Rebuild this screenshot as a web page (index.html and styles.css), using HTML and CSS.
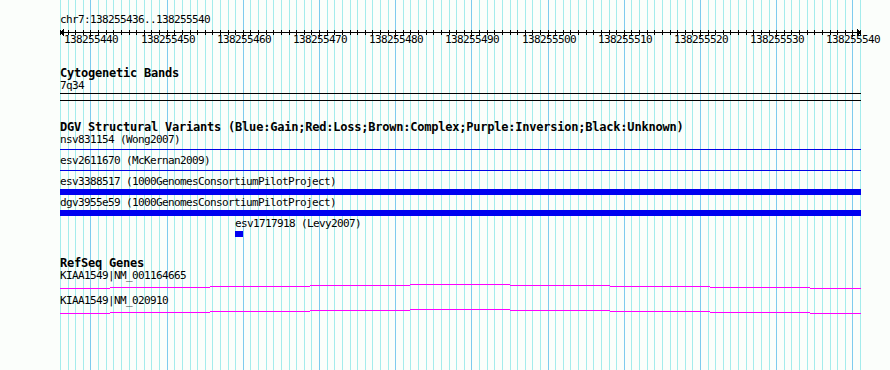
FILE: index.html
```html
<!DOCTYPE html>
<html lang="en">
<head>
    <meta charset="UTF-8">
    <title>chr7:138255436..138255540</title>
    <link rel="stylesheet" href="styles.css">
</head>
<body>
<div class="panel">
    <!--背景网格，由 script.js 画线-->
    <svg class="grid" id="grid" width="890" height="370"></svg>
    <div class="tracks">
        <!--标尺-->
        <div class="label ruler-name">chr7:138255436..138255540</div>
        <svg class="axis" id="axis" width="801" height="20"></svg>

        <!--细胞遗传带-->
        <div class="title cyto-title">Cytogenetic Bands</div>
        <div class="label under-title">7q34</div>
        <div class="band"></div>

        <!--DGV 结构变异-->
        <div class="title dgv-title">DGV Structural Variants (Blue:Gain;Red:Loss;Brown:Complex;Purple:Inversion;Black:Unknown)</div>
        <div class="label under-title">nsv831154 (Wong2007)</div>
        <div class="hairline"></div>
        <div class="label next">esv2611670 (McKernan2009)</div>
        <div class="hairline"></div>
        <div class="label next">esv3388517 (1000GenomesConsortiumPilotProject)</div>
        <div class="bar"></div>
        <div class="label after-bar">dgv3955e59 (1000GenomesConsortiumPilotProject)</div>
        <div class="bar"></div>
        <div class="label after-bar shifted">esv1717918 (Levy2007)</div>
        <div class="bar small"></div>

        <!--RefSeq 基因-->
        <div class="title gene-title">RefSeq Genes</div>
        <div class="label under-title">KIAA1549|NM_001164665</div>
        <svg class="intron" width="801" height="5">
            <path d="M0 4.5H50M50 3.5H150M150 2.5H250M250 1.5H350M350 0.5H450M450 1.5H550M550 2.5H650M650 3.5H750M750 4.5H801"/>
        </svg>
        <div class="label gene-next">KIAA1549|NM_020910</div>
        <svg class="intron" width="801" height="5">
            <path d="M0 4.5H50M50 3.5H150M150 2.5H250M250 1.5H350M350 0.5H450M450 1.5H550M550 2.5H650M650 3.5H750M750 4.5H801"/>
        </svg>
    </div>
</div>
<script src="script.js"></script>
</body>
</html>
```

FILE: styles.css
```css
* {
    padding: 0;
    margin: 0;
}

body {
    background: #fbfefb;
    width: 890px;
    height: 370px;
    overflow: hidden;
}

.panel {
    position: relative;
    width: 890px;
    height: 370px;
}

.grid {
    position: absolute;
    left: 0;
    top: 0;
}

.grid .minor {
    stroke: #a4ecec;
    stroke-width: 1;
}

.grid .major {
    stroke: #7ecbee;
    stroke-width: 1;
}

.tracks {
    position: relative;
    padding-left: 60px;
    width: 801px;
    display: flex;
    flex-direction: column;
    align-items: flex-start;
}

.label {
    font: 11px/12px "DejaVu Sans Mono", monospace;
    letter-spacing: -0.62px;
    height: 12px;
    white-space: nowrap;
    color: #000;
}

.title {
    font: bold 12px/12px "DejaVu Sans Mono", monospace;
    letter-spacing: -0.22px;
    height: 12px;
    white-space: nowrap;
    color: #000;
}

.ruler-name {
    margin-top: 14px;
}

.axis {
    overflow: visible;
}

.axis line,
.axis path {
    stroke: #000;
    stroke-width: 1;
    fill: none;
}

.axis text {
    font: 11px "DejaVu Sans Mono", monospace;
    letter-spacing: -0.62px;
    fill: #000;
}

.cyto-title {
    margin-top: 21px;
}

.under-title {
    margin-top: 1px;
}

.band {
    width: 801px;
    height: 6px;
    margin-top: 1px;
    border-top: 1px solid #000;
    border-bottom: 1px solid #000;
}

.dgv-title {
    margin-top: 20px;
}

.hairline {
    width: 801px;
    height: 1px;
    margin-top: 3px;
    background: #0000e6;
}

.next {
    margin-top: 5px;
}

.bar {
    width: 801px;
    height: 6px;
    margin-top: 1px;
    background: #0000f0;
}

.after-bar {
    margin-top: 2px;
}

.shifted,
.bar.small {
    margin-left: 175px;
}

.bar.small {
    width: 8px;
}

.gene-title {
    margin-top: 20px;
}

.intron {
    margin-top: 2px;
    shape-rendering: crispEdges;
}

.intron path {
    stroke: #ff00ff;
    stroke-width: 1;
    fill: none;
}

.gene-next {
    margin-top: 6px;
}
```

FILE: script.js
```js
// 显示区间 138255436..138255540，共 105 个碱基，宽 800px
var start = 138255436;
var bases = 105;
var left = 60;
var step = 800 / bases;
var ns = "http://www.w3.org/2000/svg";

function add(parent, name, attrs) {
    var node = document.createElementNS(ns, name);
    for (var key in attrs) {
        node.setAttribute(key, attrs[key]);
    }
    parent.appendChild(node);
    return node;
}

var grid = document.getElementById("grid");
var axis = document.getElementById("axis");
grid.setAttribute("shape-rendering", "crispEdges");
axis.setAttribute("shape-rendering", "crispEdges");

// 轴线和两端箭头（坐标相对于 x=60）
add(axis, "line", {x1: 0, y1: 6.5, x2: 801, y2: 6.5});
add(axis, "path", {d: "M3.5 3V10M2.5 4V9M1.5 5V8"});
add(axis, "path", {d: "M797.5 3V10M798.5 4V9M799.5 5V8"});

for (var k = 0; k <= bases; k++) {
    var px = Math.round(left + k * step);
    var major = (start + k) % 10 == 0;
    //网格竖线
    add(grid, "line", {
        x1: px + 0.5, y1: 0, x2: px + 0.5, y2: 370,
        "class": major ? "major" : "minor"
    });
    //刻度
    var x = px - left + 0.5;
    add(axis, "line", {x1: x, y1: 4, x2: x, y2: major ? 11 : 9});
    if (major) {
        var label = add(axis, "text", {x: x + 0.5, y: 17, "text-anchor": "middle"});
        label.textContent = start + k;
    }
}
```
